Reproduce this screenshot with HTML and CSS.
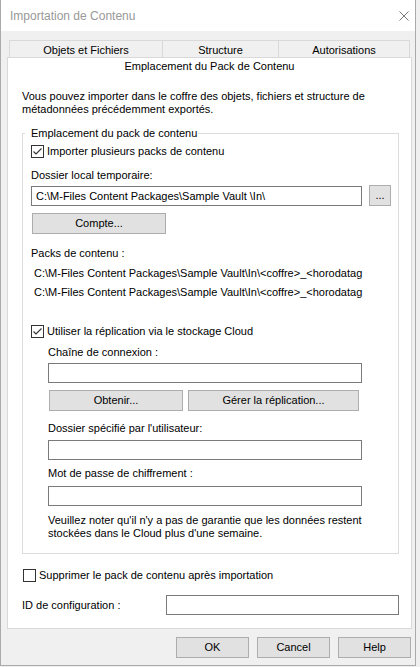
FILE: index.html
```html
<!DOCTYPE html>
<html lang="fr">
<head>
<meta charset="utf-8">
<title>Importation de Contenu</title>
<link rel="stylesheet" href="styles.css">
</head>
<body>
<div class="window">
  <div class="titlebar">
    <span class="title">Importation de Contenu</span>
    <svg class="close" width="10" height="10" viewBox="0 0 10 10"><path d="M0.5 0.5L9.5 9.5M9.5 0.5L0.5 9.5" stroke="#7a7a7a" stroke-width="1" fill="none"/></svg>
  </div>
  <div class="client">
    <div class="tabs">
      <div class="tab tab1">Objets et Fichiers</div>
      <div class="tab tab2">Structure</div>
      <div class="tab tab3">Autorisations</div>
    </div>
    <div class="panel">
      <div class="active-tab">Emplacement du Pack de Contenu</div>
      <p class="intro">Vous pouvez importer dans le coffre des objets, fichiers et structure de<br>métadonnées précédemment exportés.</p>
      <fieldset class="group">
        <legend>Emplacement du pack de contenu</legend>
        <div class="check first-check">
          <span class="box"><svg width="11" height="11" viewBox="0 0 11 11"><path d="M1.5 5.5L4 8L9.5 2.5" stroke="#333" stroke-width="1.1" fill="none"/></svg></span>
          <span>Importer plusieurs packs de contenu</span>
        </div>
        <div class="label l-temp">Dossier local temporaire:</div>
        <div class="path-row">
          <div class="input path-input">C:\M-Files Content Packages\Sample Vault \In\</div>
          <div class="btn browse">...</div>
        </div>
        <div class="btn compte">Compte...</div>
        <div class="label l-packs">Packs de contenu :</div>
        <div class="packs">
          <div class="pack">C:\M-Files Content Packages\Sample Vault\In\&lt;coffre&gt;_&lt;horodatag</div>
          <div class="pack">C:\M-Files Content Packages\Sample Vault\In\&lt;coffre&gt;_&lt;horodatag</div>
        </div>
        <div class="check cloud-check">
          <span class="box"><svg width="11" height="11" viewBox="0 0 11 11"><path d="M1.5 5.5L4 8L9.5 2.5" stroke="#333" stroke-width="1.1" fill="none"/></svg></span>
          <span>Utiliser la réplication via le stockage Cloud</span>
        </div>
        <div class="cloud">
          <div class="label l-conn">Chaîne de connexion :</div>
          <div class="input wide-input i-conn"></div>
          <div class="btn-row">
            <div class="btn obtenir">Obtenir...</div>
            <div class="btn gerer">Gérer la réplication...</div>
          </div>
          <div class="label l-user">Dossier spécifié par l'utilisateur:</div>
          <div class="input wide-input i-user"></div>
          <div class="label l-pass">Mot de passe de chiffrement :</div>
          <div class="input wide-input i-pass"></div>
          <p class="note">Veuillez noter qu'il n'y a pas de garantie que les données restent<br>stockées dans le Cloud plus d'une semaine.</p>
        </div>
      </fieldset>
      <div class="check delete-check">
        <span class="box"></span>
        <span>Supprimer le pack de contenu après importation</span>
      </div>
      <div class="config-row">
        <span class="config-label">ID de configuration :</span>
        <div class="input config-input"></div>
      </div>
    </div>
    <div class="footer">
      <div class="btn foot-btn">OK</div>
      <div class="btn foot-btn">Cancel</div>
      <div class="btn foot-btn">Help</div>
    </div>
  </div>
</div>
</body>
</html>
```
FILE: styles.css
```css
* { box-sizing: border-box; }
html, body { margin: 0; padding: 0; }
body {
  width: 420px;
  height: 667px;
  overflow: hidden;
  background: #f0f0f0;
  font-family: "Liberation Sans", Arial, sans-serif;
  font-size: 11px;
  line-height: 13px;
  color: #000;
}
.window {
  width: 416px;
  height: 666px;
  border-left: 1px solid #aaaaaa;
  border-right: 1px solid #aaaaaa;
  border-bottom: 1px solid #aaaaaa;
  background: #f0f0f0;
  display: flex;
  flex-direction: column;
}
.titlebar {
  height: 31px;
  background: #fff;
  display: flex;
  align-items: center;
  justify-content: space-between;
  padding: 0 6px 0 9px;
}
.title {
  font-size: 12px;
  color: #999;
  line-height: 15px;
  padding-top: 1px;
}
.close { display: block; }
.client {
  flex: 1;
  padding-top: 9px;
}
.tabs {
  display: flex;
  height: 17px;
  margin-left: 8px;
}
.tab {
  height: 17px;
  border: 1px solid #d9d9d9;
  border-bottom: none;
  background: #f0f0f0;
  text-align: center;
  line-height: 16px;
  padding-top: 1px;
}
.tab1 { width: 154px; }
.tab2 { width: 117px; margin-left: -1px; }
.tab3 { width: 132px; margin-left: -1px; }
.panel {
  margin-left: 6px;
  width: 405px;
  height: 572px;
  background: #fff;
  border: 1px solid #d9d9d9;
}
.active-tab {
  height: 17px;
  line-height: 17px;
  text-align: center;
}
.intro {
  margin: 15px 0 0 14px;
}
.group {
  margin: 11px 0 0 14px;
  width: 377px;
  padding: 0 0 13px 8px;
  border: 1px solid #dcdcdc;
  min-inline-size: 0;
}
.group legend {
  margin-left: -6px;
  padding: 0 1px 0 6px;
  line-height: 13px;
}
.check {
  display: flex;
  align-items: center;
  height: 13px;
}
.box {
  width: 13px;
  height: 13px;
  border: 1px solid #333;
  background: #fff;
  margin-right: 3px;
  display: flex;
  align-items: center;
  justify-content: center;
}
.box svg { display: block; }
.first-check { margin-top: 5px; }
.label { height: 13px; white-space: nowrap; }
.l-temp { margin-top: 11px; }
.path-row {
  display: flex;
  gap: 7px;
  margin-top: 3px;
  height: 21px;
  align-items: flex-start;
}
.input {
  background: #fff;
  border: 1px solid #7a7a7a;
  height: 20px;
  white-space: nowrap;
  overflow: hidden;
}
.path-input {
  width: 331px;
  margin-top: 1px;
  padding: 2px 0 0 4px;
  line-height: 15px;
}
.btn {
  background: #e1e1e1;
  border: 1px solid #adadad;
  height: 21px;
  display: flex;
  align-items: center;
  justify-content: center;
  white-space: nowrap;
}
.browse { width: 22px; }
.compte { width: 134px; margin: 7px 0 0 1px; }
.l-packs { margin-top: 13px; }
.packs {
  margin-top: 4px;
  padding-left: 3px;
  width: 334px;
  overflow: hidden;
}
.pack {
  height: 19px;
  line-height: 19px;
  white-space: nowrap;
}
.cloud-check { margin-top: 23px; }
.cloud { padding-left: 17px; }
.l-conn { margin-top: 8px; }
.wide-input { width: 314px; }
.i-conn { margin-top: 4px; }
.btn-row {
  display: flex;
  gap: 5px;
  margin: 7px 0 0 1px;
}
.obtenir { width: 134px; }
.gerer { width: 171px; }
.l-user { margin-top: 11px; }
.i-user { margin-top: 5px; }
.l-pass { margin-top: 7px; }
.i-pass { margin-top: 6px; }
.note { margin: 8px 0 0; }
.delete-check { margin: 15px 0 0 15px; }
.config-row {
  display: flex;
  align-items: center;
  margin: 13px 0 0 14px;
  height: 20px;
}
.config-label { width: 144px; }
.config-input { width: 233px; }
.footer {
  display: flex;
  justify-content: flex-end;
  gap: 8px;
  padding: 8px 4px 0 0;
}
.foot-btn { width: 73px; }
```
